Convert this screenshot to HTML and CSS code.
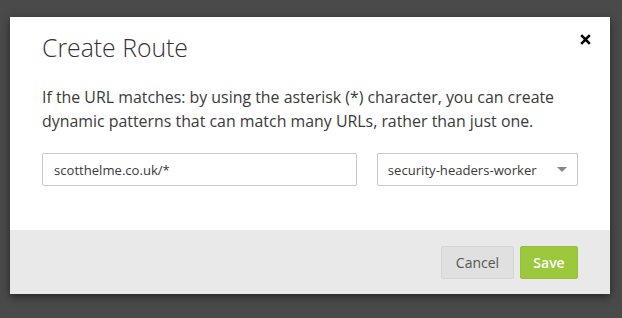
FILE: index.html
```html
<!DOCTYPE html>
<html>
<head>
<meta charset="utf-8">
<link rel="stylesheet" href="styles.css">
</head>
<body>
<div class="modal">
  <div class="body">
    <div class="head">
      <h1 class="title">Create Route</h1>
      <svg class="close" width="11" height="11" viewBox="0 0 11 11"><path d="M1.2 1.2 L9.8 9.8 M9.8 1.2 L1.2 9.8" stroke="#000" stroke-width="2.6" stroke-linecap="butt"/></svg>
    </div>
    <p class="desc">If the URL matches: by using the asterisk (*) character, you can create dynamic patterns that can match many URLs, rather than just one.</p>
    <div class="row">
      <div class="input">scotthelme.co.uk/*</div>
      <div class="select"><span>security-headers-worker</span><span class="caret"></span></div>
    </div>
  </div>
  <div class="footer">
    <button class="btn cancel">Cancel</button>
    <button class="btn save">Save</button>
  </div>
</div>
</body>
</html>
```
FILE: styles.css
```css
html, body { margin: 0; padding: 0; }
body {
  background: #4a4a4a;
  width: 622px; height: 318px; overflow: hidden;
  font-family: "Open Sans", sans-serif;
  color: #333;
}
.modal {
  margin: 17px 0 0 10px;
  width: 600px;
  background: #fff;
  box-shadow: 0 3px 8px rgba(0,0,0,0.5);
}
.body { padding: 15px 32px 44px 32px; }
.head { display: flex; justify-content: space-between; align-items: flex-start; }
.title { margin: 0; font-weight: 300; font-size: 24.8px; line-height: 30px; color: #333; }
.close { margin-top: 2px; margin-right: -13px; display: block; }
.desc { margin: 23px 0 0 0; font-size: 15.9px; line-height: 24px; color: #3a3a3a; }
.row { display: flex; gap: 20px; margin-top: 20px; }
.input, .select {
  height: 31px; border: 1px solid #c8c8c8; border-radius: 2px; box-sizing: content-box;
  font-size: 13.1px; display: flex; align-items: center; color: #3a3a3a;
}
.input { width: 302px; padding: 0 11px; }
.select { width: 186px; padding: 0 10px 0 10px; justify-content: space-between; }
.caret { width: 0; height: 0; border-left: 5px solid transparent; border-right: 5px solid transparent; border-top: 5px solid #888; }
.footer { background: #e9e9e9; height: 64px; display: flex; justify-content: flex-end; align-items: flex-start; padding: 16px 32px 0 0; box-sizing: border-box; gap: 6px; }
.btn { font-family: "Open Sans", sans-serif; font-size: 14px; height: 33px; border-radius: 2px; border: 1px solid; padding: 0; }
.cancel { width: 73px; background: #e0e0e0; border-color: #d4d4d4; color: #555; }
.save { width: 58px; background: #9bc83c; border-color: #93c037; color: #fff; font-weight: 600; }
```
